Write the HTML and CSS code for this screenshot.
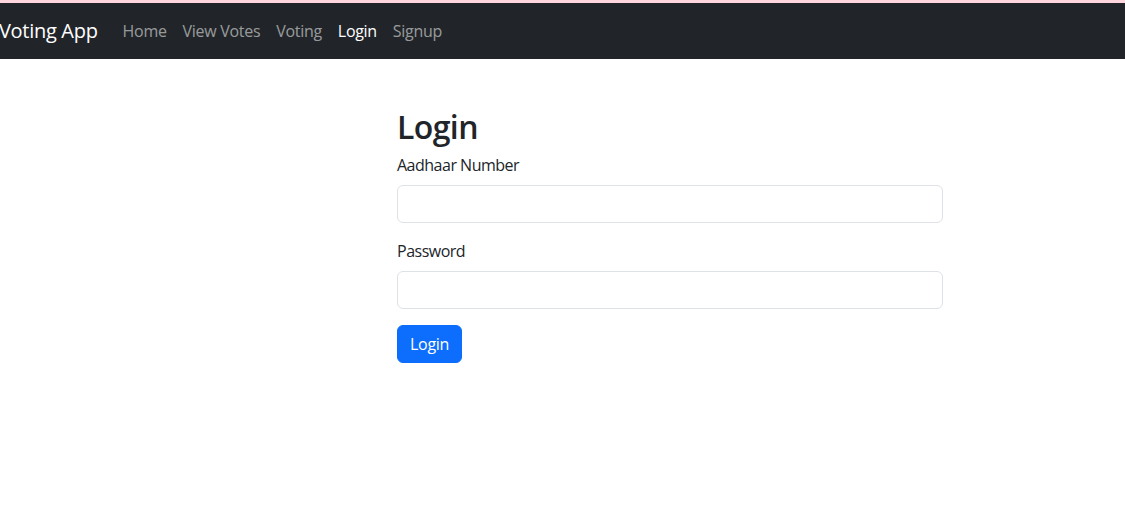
FILE: index.html
```html
<!DOCTYPE html>
<html lang="en">
<head>
<meta charset="utf-8">
<title>Voting App - Login</title>
<link rel="stylesheet" href="styles.css">
</head>
<body>
<div class="topstrip"></div>
<nav class="navbar">
  <a class="brand" href="#">Voting App</a>
  <ul class="nav">
    <li><a class="nav-link" href="#">Home</a></li>
    <li><a class="nav-link" href="#">View Votes</a></li>
    <li><a class="nav-link" href="#">Voting</a></li>
    <li><a class="nav-link active" href="#">Login</a></li>
    <li><a class="nav-link" href="#">Signup</a></li>
  </ul>
</nav>
<main class="container">
  <div class="form-col">
    <h2 class="title">Login</h2>
    <form class="form">
      <div class="field">
        <label class="label" for="aadhaar">Aadhaar Number</label>
        <input class="input" id="aadhaar" type="text">
      </div>
      <div class="field">
        <label class="label" for="password">Password</label>
        <input class="input" id="password" type="password">
      </div>
      <button class="btn" type="button">Login</button>
    </form>
  </div>
</main>
</body>
</html>
```
FILE: styles.css
```css
* { box-sizing: border-box; }
html, body { margin: 0; padding: 0; }
body {
  font-family: "Open Sans", "Noto Sans", sans-serif;
  font-size: 16px;
  line-height: 1.5;
  color: #212529;
  background: #fff;
}
.topstrip { height: 3px; background: #ffd6dd; }
.navbar {
  background: #212529;
  height: 56px;
  display: flex;
  align-items: center;
  padding: 8px 0;
}
.brand {
  color: #fff;
  text-decoration: none;
  font-size: 20px;
  line-height: 30px;
  margin-right: 17px;
  margin-left: -1px;
  letter-spacing: -0.3px;
}
.nav { list-style: none; margin: 0; padding: 0; display: flex; }
.nav-link {
  display: block;
  padding: 8px;
  color: rgba(255,255,255,.55);
  text-decoration: none;
  letter-spacing: -0.3px;
}
.nav-link.active { color: #fff; }
.container { display: flex; justify-content: flex-start; padding-top: 48px; padding-left: 397px; }
.form-col { width: 546px; }
.title {
  margin: 0 0 8px;
  padding-top: 1px;
  height: 38px;
  font-size: 32px;
  font-weight: 600;
  line-height: 1.2;
  letter-spacing: -0.6px;
}
.field { margin-bottom: 16px; }
.label { display: block; margin-bottom: 8px; letter-spacing: -0.5px; }
.input {
  display: block;
  width: 100%;
  height: 38px;
  border: 1px solid #dee2e6;
  border-radius: 6px;
  padding: 6px 12px;
  font: inherit;
}
.btn {
  background: #0d6efd;
  color: #fff;
  border: 1px solid #0d6efd;
  border-radius: 6px;
  padding: 6px 12px;
  height: 38px;
  font: inherit;
  letter-spacing: -0.3px;
}
```
